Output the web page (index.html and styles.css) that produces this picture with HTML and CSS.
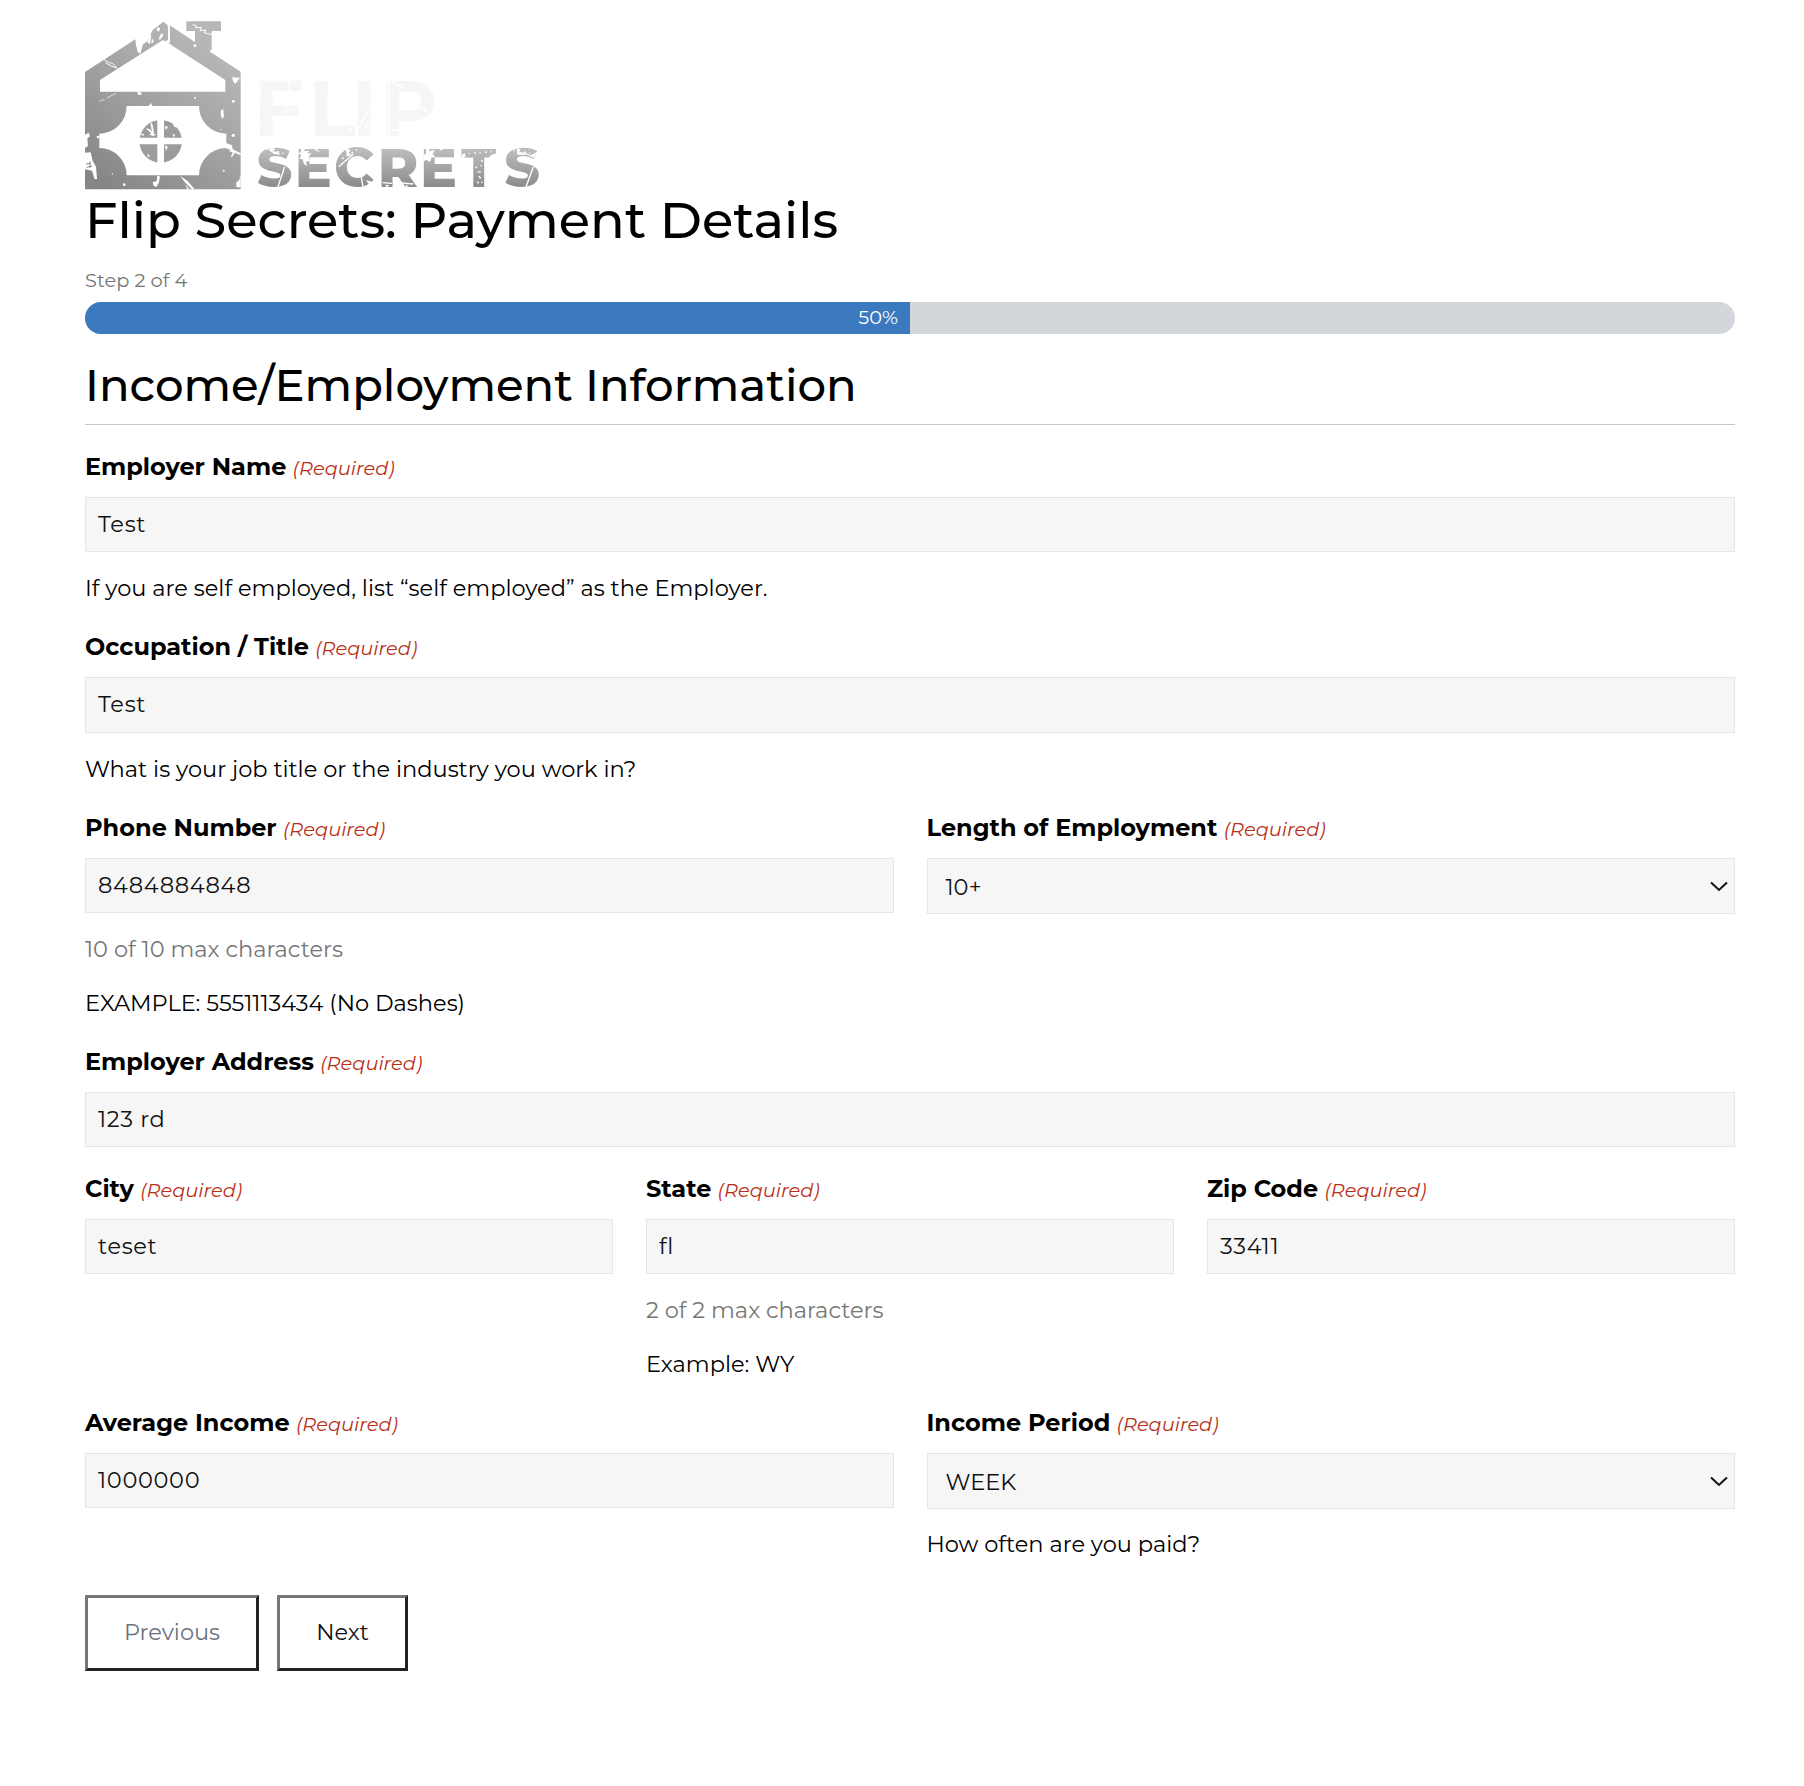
FILE: index.html
```html
<!DOCTYPE html>
<html lang="en">
<head>
<meta charset="utf-8">
<title>Flip Secrets: Payment Details</title>
<link rel="stylesheet" href="styles.css">
</head>
<body>
<main class="page">
  <svg class="logo" viewBox="45 60 1368 510" role="img" aria-label="Flip Secrets">
    <defs>
      <linearGradient id="house" x1="0.75" y1="0.1" x2="0.15" y2="1">
        <stop offset="0" stop-color="#b7b7b7"/><stop offset="0.5" stop-color="#a0a0a0"/><stop offset="1" stop-color="#858585"/>
      </linearGradient>
      <linearGradient id="word" gradientUnits="userSpaceOnUse" x1="0" y1="440" x2="0" y2="565">
        <stop offset="0" stop-color="#c0c0c0"/><stop offset="1" stop-color="#8a8a8a"/>
      </linearGradient>
    </defs>
    <!-- house -->
    <path fill="url(#house)" fill-rule="evenodd" d="M45 216L196 118L198 136L204 158L212 160L218 134L232 124L248 90L280 65L293 76L296 118L288 124L270 118L299 130V76L375 126V93H349V64H453V93H425V158L512 215V568H45Z
      M90 240V275H466V240L298 131L280 119Z
      M170 318A82 82 0 0 1 88 401V444A82 82 0 0 1 170 526H387A82 82 0 0 1 469 444V401A82 82 0 0 1 387 318Z"/>
    <circle cx="272" cy="424" r="64" fill="#9c9c9c"/>
    <!-- window bars and wear marks on the house -->
    <g fill="#fff">
      <path d="M262 356H282V492H262ZM206 413H338V433H206Z"/>
      <path d="M294 66L299 66V130L294 124ZM232 128L240 102L244 106L240 132ZM262 82L270 84L268 94L260 92ZM274 100L281 104L270 120L266 116ZM246 114L252 126L244 130Z"/>
      <path d="M486 232L510 233L497 251L490 246ZM453 330L460 328L462 350L456 356L452 344ZM236 318L243 308L247 320ZM202 276L214 277V285L204 284Z"/>
      <path d="M45 404L56 398L60 409L52 415L54 438L45 444ZM45 458L62 457L68 482L78 500L81 537L74 538L66 512L45 508Z"/>
      <path d="M458 420L470 430L486 436L488 448L512 460V466L494 458L486 472L483 470L488 456L476 454L482 450L458 440L468 436ZM512 524V562H500L498 548L508 540Z"/>
      <path d="M262 526L270 530L266 550L258 562L250 556L248 546L260 544ZM330 528L352 542L374 568H366L346 548ZM346 552L358 568H352Z"/>
      <path d="M240 364L248 374L252 398L246 402L226 384L240 388L246 396ZM238 404L246 398L258 404L250 408ZM284 378L294 380L288 390ZM306 362L320 368L326 384L312 380ZM308 402L316 404L310 412ZM284 436L294 440L288 452ZM232 460L240 468L234 472ZM208 400L222 402L220 408Z"/>
      <circle cx="375" cy="137" r="4"/><circle cx="375" cy="293" r="3"/><circle cx="490" cy="304" r="4"/><circle cx="490" cy="406" r="5"/><circle cx="461" cy="512" r="3"/><circle cx="127" cy="522" r="2"/><circle cx="163" cy="554" r="4"/><circle cx="84" cy="411" r="4"/><circle cx="453" cy="388" r="2"/><circle cx="424" cy="154" r="4"/>
    </g>
    <g fill="none" stroke="#fff">
      <path stroke-width="3" d="M100 178L118 188L128 190L142 206M106 188L124 198L140 204M368 74L380 78L376 84L394 82L390 92L408 90L402 98L426 104"/>
      <path stroke-width="2" d="M88 304L104 298M110 294L138 280"/>
      <path stroke-width="3" stroke="#8a8a8a" d="M48 492L62 490M50 502L66 498M60 484V504"/>
    </g>
    <!-- wordmark -->
    <text class="word-flip" x="550 715 844 930" y="408">FLIP</text>
    <text class="word-secrets" x="560 674 792 923 1050 1174 1303" y="561">SECRETS</text>
    <g fill="none" stroke="#fff">
      <path stroke-width="4" d="M576 240L566 330M660 242L646 348M956 236V410M912 300L862 392M940 391H1000"/>
      <path stroke-width="6" d="M1036 308L1072 338M966 246L998 264"/>
      <path stroke-width="4" d="M644 500L622 566M872 520L880 566M1390 500L1366 566M806 500L850 462M938 548L966 550M984 548L1030 552"/>
      <path stroke-width="5" stroke-dasharray="5 11 3 14" d="M590 446L648 462M816 476L866 446M940 444L1020 446M1180 462L1278 454M1236 480L1222 560M1330 450L1394 462M1218 500L1240 558"/>
      <path stroke-width="5" stroke-dasharray="3 14 5 10" d="M738 330V400M770 388L836 372M868 380L904 386M574 370L606 390M740 262L764 270M640 320L676 346"/>
    </g>
    <g fill="#fff">
      <path d="M694 440L708 446L700 454L718 452L712 462L724 458L716 472L720 482L708 486L712 498L702 492L698 478L688 476L694 466L682 458H692ZM726 440L748 442L740 448L750 456L738 452ZM1068 440L1080 446L1076 454L1094 450L1088 462L1096 470L1084 474L1080 486L1070 480L1060 484V464L1068 462ZM1100 440L1122 444L1114 452ZM604 440L616 448L608 454L624 456L632 464L612 462L596 450ZM828 446L842 450L836 460L848 466L830 468ZM1176 462L1188 466L1182 474H1174ZM1262 466L1282 458V474H1256ZM1340 442L1352 450L1346 456L1366 458L1382 466L1400 456L1392 474L1370 464L1342 464Z"/>
      <path d="M888 540L908 546L900 558L884 564L896 552ZM946 554L958 556L950 562ZM1006 554L1016 558L1008 562ZM1066 246L1090 262L1082 276L1076 264ZM838 384L846 384L840 396ZM684 296L694 290V300ZM884 370L896 376L888 384Z"/>
    </g>
  </svg>

  <h1 class="title">Flip Secrets: Payment Details</h1>
  <p class="step">Step 2 of 4</p>
  <div class="progress"><div class="progress-bar" style="width:50%"><span class="percent">50%</span></div></div>
  <h2 class="section-title">Income/Employment Information</h2>

  <form class="form">
    <div class="row"><div class="field">
      <div class="label"><b>Employer Name</b><i>(Required)</i></div>
      <div class="input">Test</div>
      <p class="help">If you are self employed, list “self employed” as the Employer.</p>
    </div></div>
    <div class="row"><div class="field">
      <div class="label"><b>Occupation / Title</b><i>(Required)</i></div>
      <div class="input">Test</div>
      <p class="help">What is your job title or the industry you work in?</p>
    </div></div>
    <div class="row">
      <div class="field">
        <div class="label"><b>Phone Number</b><i>(Required)</i></div>
        <div class="input">8484884848</div>
        <p class="help muted">10 of 10 max characters</p>
        <p class="help">EXAMPLE: 5551113434 (No Dashes)</p>
      </div>
      <div class="field">
        <div class="label"><b>Length of Employment</b><i>(Required)</i></div>
        <div class="input select"><span>10+</span><svg class="chevron" viewBox="0 0 18 11"><path d="M1 1.5L9 9L17 1.5"/></svg></div>
      </div>
    </div>
    <div class="row row-tight"><div class="field">
      <div class="label"><b>Employer Address</b><i>(Required)</i></div>
      <div class="input">123 rd</div>
    </div></div>
    <div class="row">
      <div class="field">
        <div class="label"><b>City</b><i>(Required)</i></div>
        <div class="input">teset</div>
      </div>
      <div class="field">
        <div class="label"><b>State</b><i>(Required)</i></div>
        <div class="input">fl</div>
        <p class="help muted">2 of 2 max characters</p>
        <p class="help">Example: WY</p>
      </div>
      <div class="field">
        <div class="label"><b>Zip Code</b><i>(Required)</i></div>
        <div class="input">33411</div>
      </div>
    </div>
    <div class="row row-last">
      <div class="field">
        <div class="label"><b>Average Income</b><i>(Required)</i></div>
        <div class="input">1000000</div>
      </div>
      <div class="field">
        <div class="label"><b>Income Period</b><i>(Required)</i></div>
        <div class="input select"><span>WEEK</span><svg class="chevron" viewBox="0 0 18 11"><path d="M1 1.5L9 9L17 1.5"/></svg></div>
        <p class="help">How often are you paid?</p>
      </div>
    </div>
    <div class="actions">
      <button type="button" class="btn btn-prev">Previous</button>
      <button type="button" class="btn btn-next">Next</button>
    </div>
  </form>
</main>
</body>
</html>
```
FILE: styles.css
```css
* { box-sizing: border-box; }
body { margin: 0; background: #fff; color: #000; font-family: Montserrat, Inter, sans-serif; }
h1, h2, p { margin: 0; }

.page { width: 1650px; margin-left: 85px; padding-top: 20px; }
.logo { display: block; width: 456px; height: 170px; overflow: visible; }
.word-flip { font-size: 235px; font-weight: 700; fill: #f6f6f6; }
.word-secrets { font-size: 165px; font-weight: 800; fill: url(#word); }

.title { font-size: 51.1px; line-height: 61px; font-weight: 500; white-space: nowrap; }
.step { margin-top: 17px; font-size: 19.45px; line-height: 24px; color: #767676; }
.progress { margin-top: 10px; height: 32px; border-radius: 16px; background: #d3d6db; overflow: hidden; }
.progress-bar { display: flex; align-items: flex-start; justify-content: flex-end; height: 100%; padding-right: 12px; background: #3b79be; }
.percent { font-size: 19.3px; line-height: 30px; color: #fff; }
.section-title { margin-top: 24px; padding-bottom: 12px; border-bottom: 1px solid #c8c8c8; font-size: 45px; line-height: 54px; font-weight: 500; white-space: nowrap; }

.form { margin-top: 26.5px; }
.row { display: flex; align-items: flex-start; gap: 33px; margin-bottom: 29.3px; }
.row-tight { margin-bottom: 26.6px; }
.row-last { margin-bottom: 35.2px; }
.field { flex: 1 1 0; min-width: 0; }
.label { display: flex; align-items: baseline; gap: 6.3px; height: 30px; margin-bottom: 15px; font-size: 24px; line-height: 30px; white-space: nowrap; }
.label b { font-weight: 700; }
.label i { font-size: 19.35px; color: #b93017; font-weight: 400; }
.input { display: flex; align-items: center; height: 55.4px; padding: 0 12px 1px; border: 1px solid #e6e6e6; background: #f6f6f6; font-size: 22.5px; line-height: 30px; letter-spacing: .68px; color: #111; }
.select { justify-content: space-between; height: 56.4px; padding: 1px 6px 0 18px; letter-spacing: 0; }
.chevron { width: 18px; height: 11px; fill: none; stroke: #111; stroke-width: 2; }
.help { margin-top: 21px; font-size: 22.5px; line-height: 30px; white-space: nowrap; }
.help + .help { margin-top: 23.4px; }
.select + .help { margin-top: 20px; }
.muted { color: #767676; }

.actions { display: flex; gap: 18px; }
.btn { height: 76px; padding: 0 0 2px; border: 3px solid; border-color: #767676 #222 #222 #767676; background: #fff; font: 400 22.5px/30px Montserrat, Inter, sans-serif; }
.btn-prev { width: 174px; color: #6b7280; }
.btn-next { width: 131px; color: #111; }
```
